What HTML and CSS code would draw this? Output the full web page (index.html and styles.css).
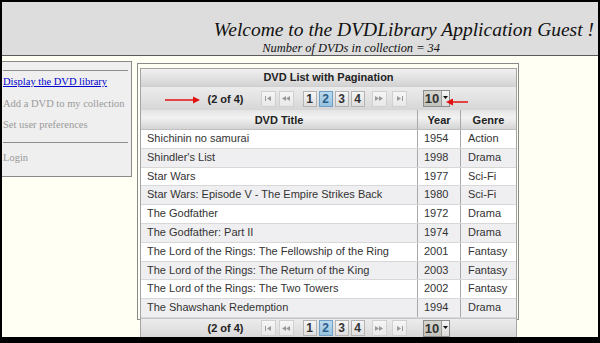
FILE: index.html
```html
<!DOCTYPE html>
<html lang="en">
<head>
    <meta charset="UTF-8">
    <meta name="viewport" content="width=device-width, initial-scale=1.0">
    <title>DVDLibrary</title>
    <link rel="stylesheet" href="styles.css">
</head>
<body>

<div class="frame">
    <div class="header">
        <div class="welcome">Welcome to the DVDLibrary Application Guest !</div>
        <div class="count">Number of DVDs in collection = 34</div>
    </div>

    <div class="main">
        <div class="menu">
            <hr>
            <a class="menu-link" href="#">Display the DVD library</a>
            <span class="menu-item">Add a DVD to my collection</span>
            <span class="menu-item">Set user preferences</span>
            <hr>
            <span class="menu-item">Login</span>
        </div>

        <div class="content">
            <div class="panel">
                <div class="panel-title">DVD List with Pagination</div>

                <div class="pager">
                    <svg class="note note-left" width="36" height="8" viewBox="0 0 36 8">
                        <line x1="0" y1="4" x2="29" y2="4" stroke="#e31010" stroke-width="1.5"/>
                        <polygon points="28,0.5 35,4 28,7.5" fill="#e31010"/>
                    </svg>
                    <span class="pager-count">(2 of 4)</span>
                    <span class="pager-btn nav first"><svg width="7" height="5" viewBox="0 0 7 5"><rect x="0" y="0" width="1" height="5" fill="#999"/><polygon points="6,0 2,2.5 6,5" fill="#999"/></svg></span>
                    <span class="pager-btn nav"><svg width="8" height="5" viewBox="0 0 8 5"><polygon points="4,0 0,2.5 4,5" fill="#999"/><polygon points="8,0 4,2.5 8,5" fill="#999"/></svg></span>
                    <span class="pager-pages">
                        <span class="pager-btn page">1</span>
                        <span class="pager-btn page active">2</span>
                        <span class="pager-btn page">3</span>
                        <span class="pager-btn page">4</span>
                    </span>
                    <span class="pager-btn nav next"><svg width="8" height="5" viewBox="0 0 8 5"><polygon points="0,0 4,2.5 0,5" fill="#999"/><polygon points="4,0 8,2.5 4,5" fill="#999"/></svg></span>
                    <span class="pager-btn nav"><svg width="7" height="5" viewBox="0 0 7 5"><polygon points="1,0 5,2.5 1,5" fill="#999"/><rect x="6" y="0" width="1" height="5" fill="#999"/></svg></span>
                    <span class="pager-select">
                        <span class="select-value">10</span>
                        <span class="select-arrow"><svg width="5" height="3" viewBox="0 0 5 3"><polygon points="0,0 5,0 2.5,3" fill="#111"/></svg></span>
                    </span>
                    <svg class="note note-right" width="22" height="8" viewBox="0 0 22 8">
                        <polygon points="0,4 7,0.5 7,7.5" fill="#e31010"/>
                        <line x1="6" y1="4" x2="22" y2="4" stroke="#e31010" stroke-width="1.5"/>
                    </svg>
                </div>

                <table class="dvd-table">
                    <thead>
                        <tr>
                            <th class="col-title">DVD Title</th>
                            <th class="col-year">Year</th>
                            <th class="col-genre">Genre</th>
                        </tr>
                    </thead>
                    <tbody>
                        <tr><td>Shichinin no samurai</td><td>1954</td><td>Action</td></tr>
                        <tr><td>Shindler's List</td><td>1998</td><td>Drama</td></tr>
                        <tr><td>Star Wars</td><td>1977</td><td>Sci-Fi</td></tr>
                        <tr><td>Star Wars: Episode V - The Empire Strikes Back</td><td>1980</td><td>Sci-Fi</td></tr>
                        <tr><td>The Godfather</td><td>1972</td><td>Drama</td></tr>
                        <tr><td>The Godfather: Part II</td><td>1974</td><td>Drama</td></tr>
                        <tr><td>The Lord of the Rings: The Fellowship of the Ring</td><td>2001</td><td>Fantasy</td></tr>
                        <tr><td>The Lord of the Rings: The Return of the King</td><td>2003</td><td>Fantasy</td></tr>
                        <tr><td>The Lord of the Rings: The Two Towers</td><td>2002</td><td>Fantasy</td></tr>
                        <tr><td>The Shawshank Redemption</td><td>1994</td><td>Drama</td></tr>
                    </tbody>
                </table>

                <div class="pager bottom">
                    <span class="pager-count">(2 of 4)</span>
                    <span class="pager-btn nav first"><svg width="7" height="5" viewBox="0 0 7 5"><rect x="0" y="0" width="1" height="5" fill="#999"/><polygon points="6,0 2,2.5 6,5" fill="#999"/></svg></span>
                    <span class="pager-btn nav"><svg width="8" height="5" viewBox="0 0 8 5"><polygon points="4,0 0,2.5 4,5" fill="#999"/><polygon points="8,0 4,2.5 8,5" fill="#999"/></svg></span>
                    <span class="pager-pages">
                        <span class="pager-btn page">1</span>
                        <span class="pager-btn page active">2</span>
                        <span class="pager-btn page">3</span>
                        <span class="pager-btn page">4</span>
                    </span>
                    <span class="pager-btn nav next"><svg width="8" height="5" viewBox="0 0 8 5"><polygon points="0,0 4,2.5 0,5" fill="#999"/><polygon points="4,0 8,2.5 4,5" fill="#999"/></svg></span>
                    <span class="pager-btn nav"><svg width="7" height="5" viewBox="0 0 7 5"><polygon points="1,0 5,2.5 1,5" fill="#999"/><rect x="6" y="0" width="1" height="5" fill="#999"/></svg></span>
                    <span class="pager-select">
                        <span class="select-value">10</span>
                        <span class="select-arrow"><svg width="5" height="3" viewBox="0 0 5 3"><polygon points="0,0 5,0 2.5,3" fill="#111"/></svg></span>
                    </span>
                </div>
            </div>
        </div>
    </div>
</div>

</body>
</html>
```

FILE: styles.css
```css
body {
    margin: 0;
    background-color: #fffff3;
}
.frame {
    box-sizing: border-box;
    width: 600px;
    height: 343px;
    border: 2px solid #000;
    border-bottom-width: 6px;
    overflow: hidden;
    background-color: #fffff3;
}
.header {
    height: 54px;
    background-color: #dddddd;
    border-bottom: 1px solid #5a5a5a;
    font-family: "Liberation Serif", serif;
    font-style: italic;
    color: #111;
    box-sizing: border-box;
}
.welcome {
    padding-top: 17px;
    padding-right: 4px;
    text-align: right;
    font-size: 19.5px;
    line-height: 22px;
}
.count {
    text-align: right;
    padding-right: 158px;
    font-size: 12.4px;
    line-height: 15px;
}
.main {
    display: flex;
    align-items: flex-start;
}
.menu {
    width: 129px;
    margin-top: 5px;
    padding-bottom: 8px;
    background-color: #efefef;
    border: 1px solid #8a8a8a;
    border-left: none;
    font-family: "Liberation Serif", serif;
    font-size: 10.5px;
    line-height: 21.5px;
}
.menu hr {
    margin: 8px 3px 0 1px;
    border: none;
    border-top: 1px solid #8c8c8c;
}
.menu hr + .menu-item {
    margin-top: 4px;
}
.menu-link, .menu-item {
    display: block;
    padding-left: 1px;
}
.menu-link {
    color: #0000cc;
}
.menu-item {
    color: #9a9a9a;
}
.menu .menu-item + hr {
    margin-top: 6px;
}
.content {
    box-sizing: border-box;
    width: 382px;
    height: 257px;
    margin-top: 7px;
    margin-left: 5px;
    padding: 4px 1px 0 2px;
    border: 1px solid #8a8a8a;
}
.panel {
    border: 1px solid #a4a4a4;
    background-color: #fff;
    font-family: "Liberation Sans", Arial, sans-serif;
    font-size: 11px;
    color: #333;
}
.panel-title {
    height: 17px;
    line-height: 17px;
    text-align: center;
    font-weight: bold;
    color: #222;
    background: linear-gradient(#f1f1f1, #e4e4e4 45%, #d3d3d3);
}
.pager {
    position: relative;
    display: flex;
    align-items: center;
    justify-content: center;
    height: 24px;
    background: linear-gradient(#ececec, #e2e2e2 50%, #d6d6d6);
    border-top: 1px solid #cfcfcf;
    box-sizing: border-box;
}
.pager.bottom {
    height: 20px;
    border-top: 1px solid #c4c4c4;
}
.pager-count {
    font-weight: bold;
    color: #222;
    margin-right: 17px;
}
.pager-btn {
    box-sizing: border-box;
    display: flex;
    align-items: center;
    justify-content: center;
    height: 16px;
    border: 1px solid #b4b4b4;
    background: linear-gradient(#f6f6f6, #dedede);
}
.pager-btn.nav {
    width: 15px;
    border-color: #d0d0d0;
    background: linear-gradient(#f6f6f6, #e8e8e8);
}
.pager-btn.nav + .pager-btn.nav {
    margin-left: 3px;
}
.pager-btn.next + .pager-btn.nav {
    margin-left: 5px;
}
.pager-pages {
    display: flex;
    gap: 2px;
    margin: 0 7px 0 9px;
}
.pager-btn.page {
    width: 14px;
    font-size: 12px;
    font-weight: bold;
    color: #333;
}
.pager-btn.active {
    border-color: #6f9fc4;
    background: linear-gradient(#bcdaee, #98c2de);
    color: #2a5f8c;
}
.pager-select {
    display: flex;
    box-sizing: border-box;
    height: 17px;
    margin-left: 16px;
    border: 1px solid #8e8e8e;
}
.select-value {
    width: 17px;
    line-height: 15px;
    text-align: center;
    font-size: 13px;
    font-weight: bold;
    color: #333;
    background: linear-gradient(#d6d6ce, #c2c2ba);
}
.select-arrow {
    width: 8px;
    display: flex;
    justify-content: center;
    padding-top: 5px;
    box-sizing: border-box;
    border-left: 1px solid #9a9a9a;
    background: linear-gradient(#f6f6f6, #dadada);
}
.note {
    position: absolute;
}
.note-left {
    left: 24px;
    top: 9px;
}
.note-right {
    left: 305px;
    top: 11px;
}
.dvd-table {
    width: 100%;
    border-collapse: collapse;
    table-layout: fixed;
}
.dvd-table th {
    height: 19px;
    padding: 0;
    font-weight: bold;
    color: #222;
    background: linear-gradient(#e4e4e4, #f2f2f2 40%, #d4d4d4);
    border-bottom: 1px solid #c0c0c0;
    border-left: 1px solid #a8a8a8;
}
.dvd-table th:first-child, .dvd-table td:first-child {
    border-left: none;
}
.col-title {
    width: 276px;
}
.col-year {
    width: 42px;
}
.dvd-table td {
    padding: 0 6px;
    line-height: 17.8px;
    white-space: nowrap;
    overflow: hidden;
    border-bottom: 1px solid #d8d8d8;
    border-left: 1px solid #a8a8a8;
}
.dvd-table td + td + td {
    padding-left: 7px;
}
.dvd-table tbody tr:nth-child(even) {
    background-color: #efeff1;
}
```
